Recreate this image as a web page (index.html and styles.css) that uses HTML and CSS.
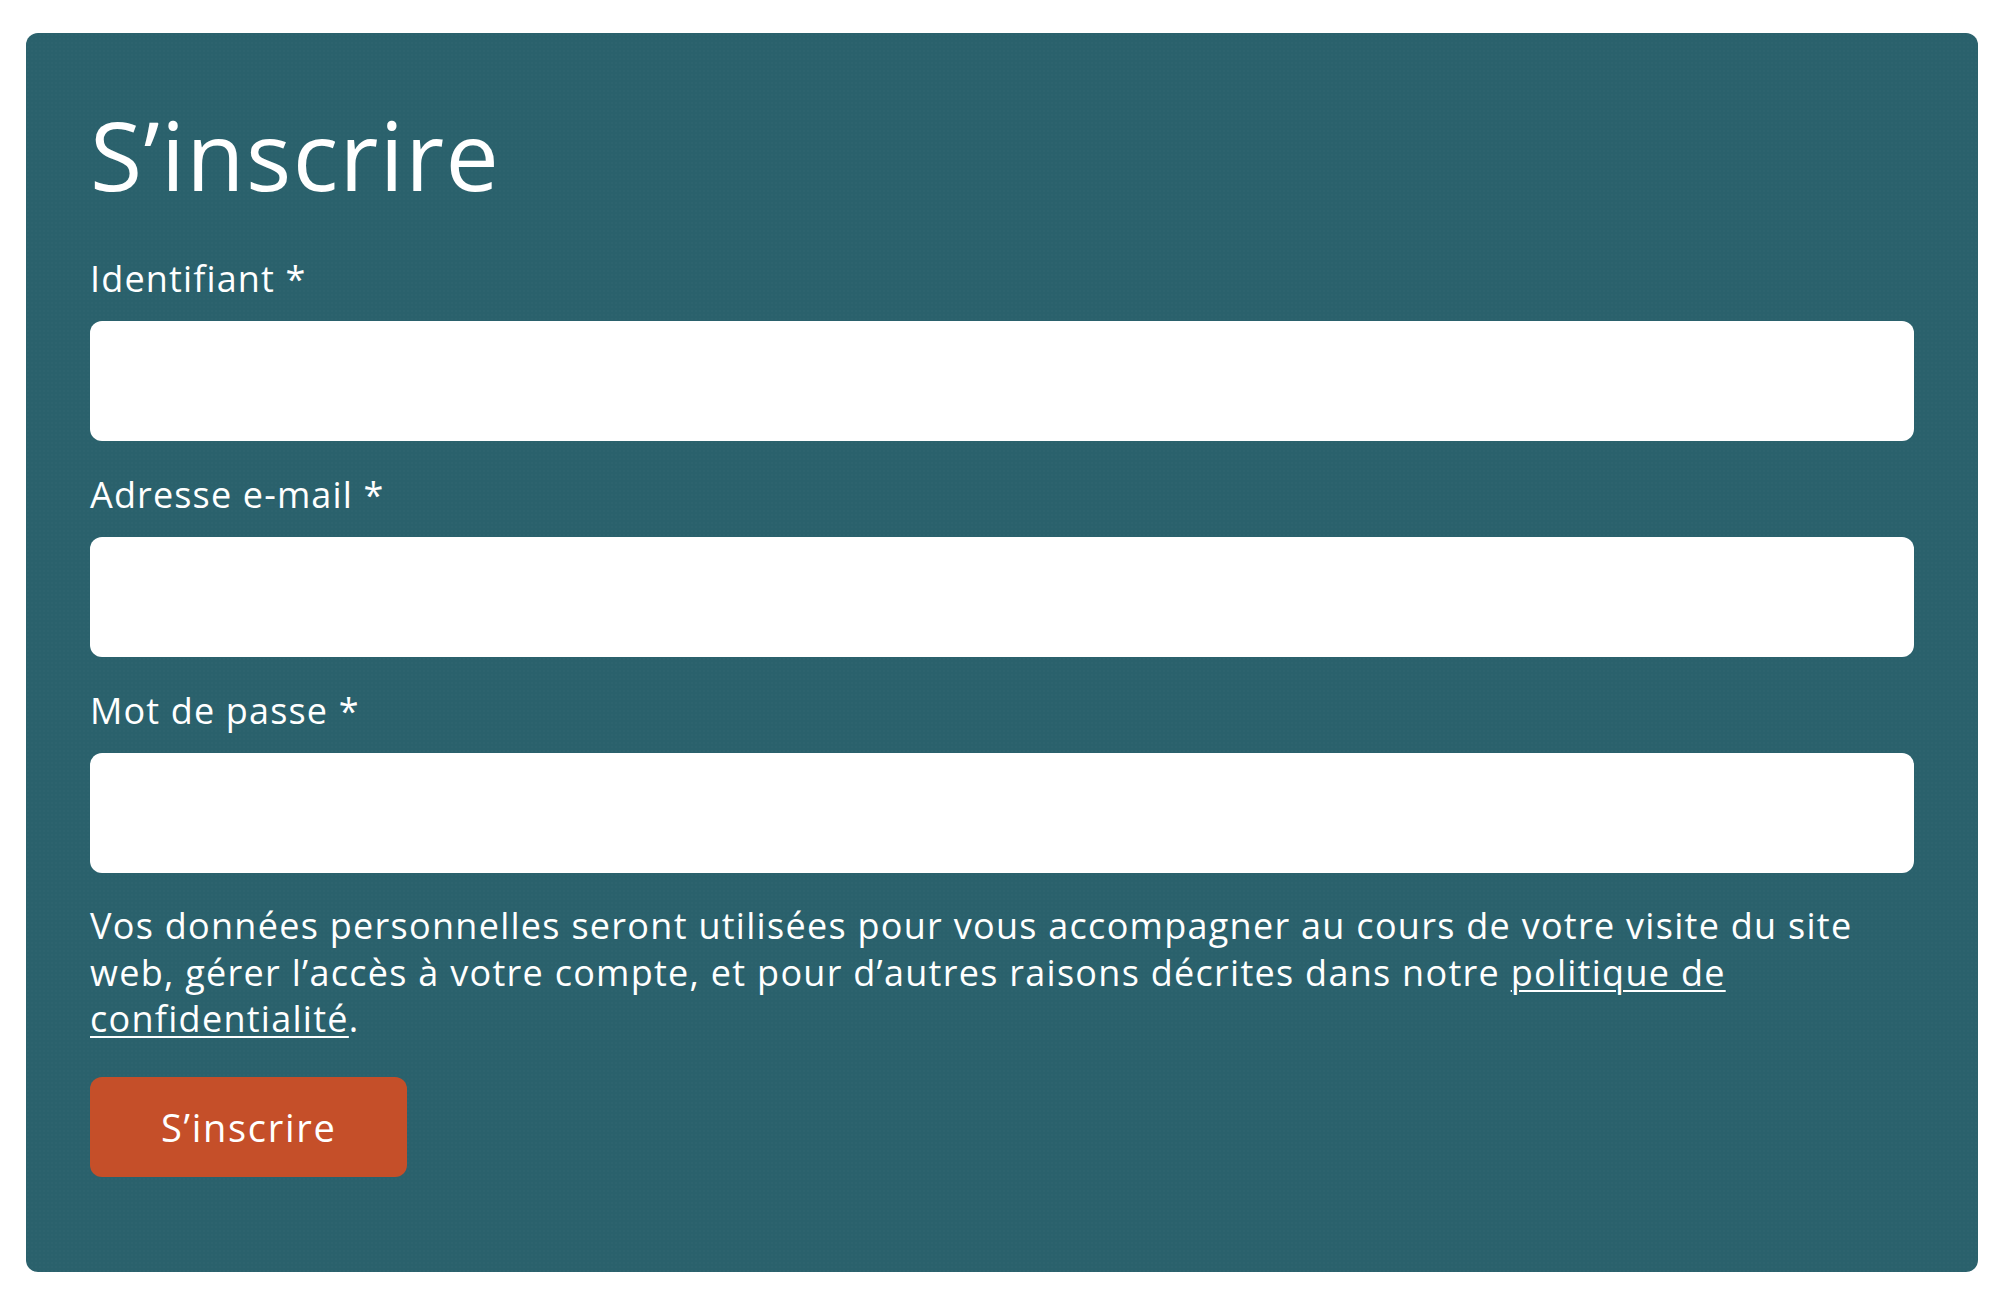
FILE: index.html
```html
<!DOCTYPE html>
<html lang="fr">
<head>
<meta charset="utf-8">
<title>S’inscrire</title>
<link rel="stylesheet" href="styles.css">
</head>
<body>
<div class="page">
  <section class="panel">
    <h2 class="title">S’inscrire</h2>
    <form class="form">
      <div class="field">
        <label class="label" for="username">Identifiant *</label>
        <input class="input" id="username" type="text">
      </div>
      <div class="field">
        <label class="label" for="email">Adresse e-mail *</label>
        <input class="input" id="email" type="email">
      </div>
      <div class="field">
        <label class="label" for="password">Mot de passe *</label>
        <input class="input" id="password" type="password">
      </div>
      <p class="privacy">Vos données personnelles seront utilisées pour vous accompagner au cours de votre visite du site web, gérer l’accès à votre compte, et pour d’autres raisons décrites dans notre <a class="link" href="#">politique de confidentialité</a>.</p>
      <div class="actions">
        <button class="button" type="submit">S’inscrire</button>
      </div>
    </form>
  </section>
</div>
</body>
</html>
```

FILE: styles.css
```css
html, body {
  margin: 0;
  padding: 0;
  background: #ffffff;
}

body {
  font-family: "Open Sans", "Noto Sans", sans-serif;
  color: #ffffff;
}

.page {
  padding: 33px 20px 0 26px;
}

.panel {
  background-color: #2a616c;
  background-image: radial-gradient(rgba(255, 255, 255, 0.035) 0.6px, transparent 0.8px);
  background-size: 4px 4px;
  border-radius: 12px;
  padding: 64px 64px 95px 64px;
}

.title {
  margin: 0;
  font-size: 95px;
  line-height: 114px;
  font-weight: 400;
  letter-spacing: 1.4px;
}

.form {
  display: flex;
  flex-direction: column;
  margin-top: 44px;
}

.field {
  display: flex;
  flex-direction: column;
  gap: 19px;
  margin-bottom: 30px;
}

.label {
  font-size: 36px;
  line-height: 47px;
  letter-spacing: 1.15px;
}

.input {
  display: block;
  box-sizing: border-box;
  width: 100%;
  height: 120px;
  border: 0;
  border-radius: 12px;
  background: #ffffff;
  padding: 0 24px;
  font: inherit;
  font-size: 36px;
  outline: none;
}

.privacy {
  margin: 0;
  max-width: 1810px;
  font-size: 36px;
  line-height: 46.5px;
  letter-spacing: 1.28px;
}

.link {
  color: #ffffff;
  text-decoration: underline;
  text-decoration-thickness: 2px;
  text-underline-offset: 4px;
}

.actions {
  margin-top: 34.5px;
}

.button {
  height: 100px;
  padding: 0 71px;
  border: 0;
  border-radius: 12px;
  background: #c54f29;
  color: #ffffff;
  font-family: "Open Sans", "Noto Sans", sans-serif;
  font-size: 38px;
  letter-spacing: 1.7px;
  cursor: pointer;
}
```
